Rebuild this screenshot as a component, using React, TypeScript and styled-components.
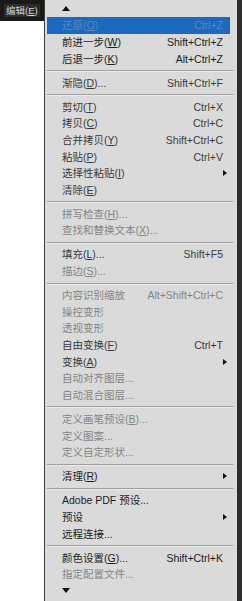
import styled, { createGlobalStyle } from 'styled-components';

const GlobalStyle = createGlobalStyle`
  html, body {
    margin: 0;
    padding: 0;
    background: #ffffff;
  }
  body {
    font-family: "Liberation Sans", "Noto Sans CJK SC", sans-serif;
  }
`;

type Tone = 'strong' | 'normal' | 'muted' | 'active';

interface Item {
  label: string;
  key?: string;
  tail?: string;
  shortcut?: string;
  submenu?: boolean;
  tone: Tone;
  active?: boolean;
}

type Entry = Item | 'sep';

const TONES: Record<Tone, string> = {
  strong: '#1c1c1c',
  normal: '#3a3a3a',
  muted: '#858585',
  active: '#5a86b8',
};

const Page = styled.div`
  display: flex;
  width: 242px;
  height: 601px;
  overflow: hidden;
`;

const BarStub = styled.div`
  width: 44px;
  flex: none;
  display: flex;
  flex-direction: column;
`;

const BarItem = styled.div`
  height: 21px;
  background: #191919;
  display: flex;
  align-items: center;
  padding-left: 4px;
  white-space: nowrap;
`;

const BarLabel = styled.span`
  background: #2c2c2c;
  color: #d4d4d4;
  font-size: 9.5px;
  line-height: 13px;
  padding: 0 2px;
  white-space: nowrap;
`;

const Menu = styled.div`
  flex: 1;
  display: flex;
  flex-direction: column;
  background: #dadada;
  border-left: 1px solid #3e3e3e;
  border-right: 5px solid #2e2e2e;
  padding: 0 2px;
`;

const ArrowRow = styled.div<{ $down?: boolean }>`
  height: ${(p) => (p.$down ? '16.4px' : '17px')};
  display: flex;
  align-items: center;
  padding-left: 15px;
  padding-bottom: ${(p) => (p.$down ? '2px' : '0')};
`;

const Triangle = styled.div<{ $down?: boolean }>`
  width: 0;
  height: 0;
  border-left: 4px solid transparent;
  border-right: 4px solid transparent;
  ${(p) =>
    p.$down ? 'border-top: 5px solid #111;' : 'border-bottom: 5px solid #111;'}
`;

const Row = styled.div<{ $active?: boolean; $tone: Tone }>`
  height: 16.7px;
  display: grid;
  grid-template-columns: 1fr auto;
  align-items: center;
  padding: 0 4px 0 15px;
  margin-right: 5px;
  font-size: 10.5px;
  color: ${(p) => TONES[p.$tone]};
  background: ${(p) => (p.$active ? '#1b69c1' : 'transparent')};
  white-space: nowrap;
`;

const Label = styled.span`
  line-height: 14px;
`;

const Shortcut = styled.span`
  line-height: 14px;
  padding-right: 3px;
`;

const SubArrow = styled.span`
  width: 0;
  height: 0;
  border-top: 3px solid transparent;
  border-bottom: 3px solid transparent;
  border-left: 4px solid #111;
  margin-right: -1px;
`;

const Separator = styled.div`
  height: 7.4px;
  display: flex;
  align-items: center;
  margin-right: 2px;

  &::after {
    content: '';
    flex: 1;
    height: 1px;
    background: #9e9e9e;
    box-shadow: 0 1px 0 #ececec;
  }
`;

const entries: Entry[] = [
  { label: '还原', key: 'O', shortcut: 'Ctrl+Z', tone: 'active', active: true },
  { label: '前进一步', key: 'W', shortcut: 'Shift+Ctrl+Z', tone: 'strong' },
  { label: '后退一步', key: 'K', shortcut: 'Alt+Ctrl+Z', tone: 'strong' },
  'sep',
  { label: '渐隐', key: 'D', tail: '...', shortcut: 'Shift+Ctrl+F', tone: 'normal' },
  'sep',
  { label: '剪切', key: 'T', shortcut: 'Ctrl+X', tone: 'normal' },
  { label: '拷贝', key: 'C', shortcut: 'Ctrl+C', tone: 'normal' },
  { label: '合并拷贝', key: 'Y', shortcut: 'Shift+Ctrl+C', tone: 'normal' },
  { label: '粘贴', key: 'P', shortcut: 'Ctrl+V', tone: 'normal' },
  { label: '选择性粘贴', key: 'I', submenu: true, tone: 'normal' },
  { label: '清除', key: 'E', tone: 'normal' },
  'sep',
  { label: '拼写检查', key: 'H', tail: '...', tone: 'muted' },
  { label: '查找和替换文本', key: 'X', tail: '...', tone: 'muted' },
  'sep',
  { label: '填充', key: 'L', tail: '...', shortcut: 'Shift+F5', tone: 'normal' },
  { label: '描边', key: 'S', tail: '...', tone: 'muted' },
  'sep',
  { label: '内容识别缩放', shortcut: 'Alt+Shift+Ctrl+C', tone: 'muted' },
  { label: '操控变形', tone: 'muted' },
  { label: '透视变形', tone: 'muted' },
  { label: '自由变换', key: 'F', shortcut: 'Ctrl+T', tone: 'normal' },
  { label: '变换', key: 'A', submenu: true, tone: 'normal' },
  { label: '自动对齐图层...', tone: 'muted' },
  { label: '自动混合图层...', tone: 'muted' },
  'sep',
  { label: '定义画笔预设', key: 'B', tail: '...', tone: 'muted' },
  { label: '定义图案...', tone: 'muted' },
  { label: '定义自定形状...', tone: 'muted' },
  'sep',
  { label: '清理', key: 'R', submenu: true, tone: 'strong' },
  'sep',
  { label: 'Adobe PDF 预设...', tone: 'strong' },
  { label: '预设', submenu: true, tone: 'strong' },
  { label: '远程连接...', tone: 'strong' },
  'sep',
  { label: '颜色设置', key: 'G', tail: '...', shortcut: 'Shift+Ctrl+K', tone: 'strong' },
  { label: '指定配置文件...', tone: 'muted' },
];

function MenuRow({ item }: { item: Item }) {
  return (
    <Row $active={item.active} $tone={item.tone}>
      <Label>
        {item.label}
        {item.key && (
          <>
            (<u>{item.key}</u>)
          </>
        )}
        {item.tail}
      </Label>
      {item.submenu ? <SubArrow /> : <Shortcut>{item.shortcut}</Shortcut>}
    </Row>
  );
}

export default function App() {
  return (
    <>
      <GlobalStyle />
      <Page>
        <BarStub>
          <BarItem>
            <BarLabel>
              编辑(<u>E</u>)
            </BarLabel>
          </BarItem>
        </BarStub>
        <Menu>
          <ArrowRow>
            <Triangle />
          </ArrowRow>
          {entries.map((e, i) =>
            e === 'sep' ? <Separator key={i} /> : <MenuRow key={i} item={e} />
          )}
          <ArrowRow $down>
            <Triangle $down />
          </ArrowRow>
        </Menu>
      </Page>
    </>
  );
}
